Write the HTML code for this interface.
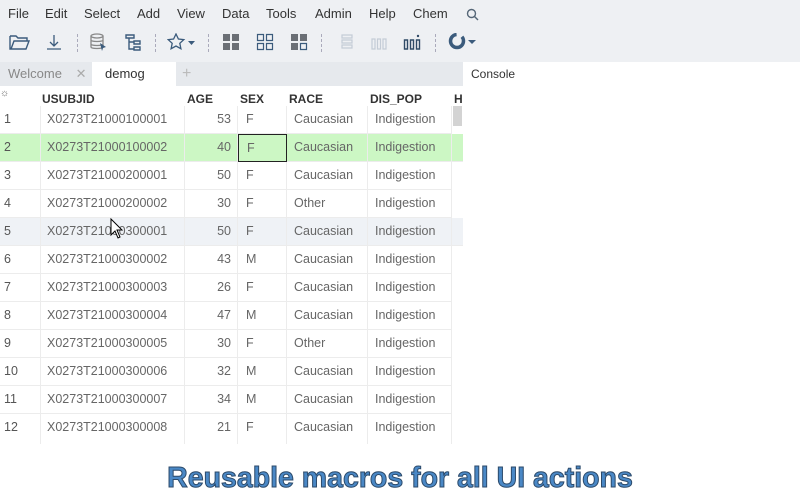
<!DOCTYPE html>
<html><head><meta charset="utf-8"><style>
*{margin:0;padding:0;box-sizing:border-box}
body{width:800px;height:500px;overflow:hidden;background:#fff;font-family:"Liberation Sans",sans-serif;position:relative}
.top{position:absolute;left:0;top:0;width:800px;height:62px;background:#eef0f3}
.menu span{position:absolute;top:6px;font-size:13px;color:#333}
.ic{position:absolute;top:33px}
.sep{position:absolute;top:34px;width:0;height:18px;border-left:1px dashed #aab}
.tabs{position:absolute;left:0;top:62px;width:463px;height:24px;background:#e6e9ed}
.tab{position:absolute;top:62px;height:24px;font-size:13px;line-height:24px}
.right{position:absolute;left:463px;top:62px;width:337px;height:382px;background:#fff}
.hd{position:absolute;top:6px;font-size:12px;font-weight:bold;color:#333}
.row{position:absolute;left:0;width:452px;height:28px;border-bottom:1px solid #ececec;font-size:12.5px;color:#666}
.row div{position:absolute;top:0;height:28px;line-height:27px;border-right:1px solid #ececec}
.c0{left:0;width:41px;padding-left:4px;color:#555}
.c1{left:41px;width:144px;padding-left:6px}
.c2{left:185px;width:53px;text-align:right;padding-right:6px}
.c3{left:238px;width:49px;padding-left:8px}
.c4{left:287px;width:81px;padding-left:7px}
.c5{left:368px;width:84px;padding-left:7px}
.title{position:absolute;left:0;width:800px;top:462px;text-align:center;font-size:28.5px;font-weight:bold;color:#4a88c6;-webkit-text-stroke:1px #2c4a6a}
</style></head><body>
<div class="top"></div>
<div class="menu">
<span style="left:8px">File</span><span style="left:45px">Edit</span><span style="left:84px">Select</span><span style="left:137px">Add</span><span style="left:177px">View</span><span style="left:222px">Data</span><span style="left:266px">Tools</span><span style="left:315px">Admin</span><span style="left:369px">Help</span><span style="left:413px">Chem</span>
<svg style="position:absolute;left:466px;top:8px" width="13" height="13"><circle cx="5.5" cy="5.5" r="4" fill="none" stroke="#567" stroke-width="1.4"/><path d="M8.5 8.5L12 12" stroke="#567" stroke-width="1.4"/></svg>
</div>
<svg class="ic" style="left:9px" width="22" height="18"><path d="M1 3h6l2 2h9v3M1 3v13h16l3-8H5l-3 8" fill="none" stroke="#3b5b7c" stroke-width="1.4"/></svg>
<svg class="ic" style="left:45px" width="18" height="18"><path d="M9 2v11M5 9l4 4 4-4M2 16h14" fill="none" stroke="#3b5b7c" stroke-width="1.3"/></svg>
<div class="sep" style="left:77px"></div>
<svg class="ic" style="left:89px" width="20" height="18"><ellipse cx="8" cy="3" rx="6" ry="2" fill="none" stroke="#888" stroke-width="1.3"/><path d="M2 3v11c0 2 12 2 12 0V3M2 7c0 2 12 2 12 0M2 11c0 2 12 2 12 0" fill="none" stroke="#888" stroke-width="1.3"/><path d="M11 10l6 4-3 1-1 3z" fill="#3b5b7c"/></svg>
<svg class="ic" style="left:124px" width="18" height="18"><path d="M2 2h8v3H2zM10 8h6v3h-6zM10 14h6v3h-6zM5 5v11h5M5 9h5" fill="none" stroke="#3b5b7c" stroke-width="1.4"/></svg>
<div class="sep" style="left:155px"></div>
<svg class="ic" style="left:167px" width="30" height="18"><path d="M9 1l2.4 5 5.4.6-4 3.7 1.1 5.4L9 13l-4.9 2.7 1.1-5.4-4-3.7 5.4-.6z" fill="none" stroke="#3b5b7c" stroke-width="1.3"/><path d="M21 8h7l-3.5 4z" fill="#3b5b7c"/></svg>
<div class="sep" style="left:208px"></div>
<svg class="ic" style="left:222px" width="18" height="18"><path d="M1 1h7v7H1zM10 1h7v7h-7zM1 10h7v7H1zM10 10h7v7h-7z" fill="#6b6f75"/></svg>
<svg class="ic" style="left:256px" width="18" height="18"><path d="M1.5 1.5h6v6h-6zM10.5 1.5h6v6h-6zM1.5 10.5h6v6h-6zM10.5 10.5h6v6h-6z" fill="none" stroke="#3b5b7c" stroke-width="1.2"/></svg>
<svg class="ic" style="left:290px" width="18" height="18"><path d="M1 1h7v7H1zM10 1h7v7h-7zM1 10h7v7H1z" fill="#6b6f75"/><path d="M10.5 10.5h6v6h-6z" fill="none" stroke="#3b5b7c" stroke-width="1.2"/></svg>
<div class="sep" style="left:321px"></div>
<svg class="ic" style="left:336px" width="18" height="18"><path d="M6 2h10v3H6zM6 7h10v3H6zM6 12h10v3H6z" fill="none" stroke="#c4ccd6" stroke-width="1.2"/></svg>
<svg class="ic" style="left:370px" width="18" height="18"><path d="M2 6h3v10H2zM7.5 6h3v10h-3zM13 6h3v10h-3z" fill="none" stroke="#c4ccd6" stroke-width="1.2"/></svg>
<svg class="ic" style="left:403px" width="18" height="18"><path d="M1.5 7h3v9h-3zM7.5 7h3v9h-3zM13.5 7h3v9h-3z" fill="none" stroke="#2f4a66" stroke-width="1.4"/><circle cx="15" cy="3" r="1.2" fill="#2f4a66"/></svg>
<div class="sep" style="left:435px"></div>
<svg class="ic" style="left:448px" width="30" height="20"><circle cx="9" cy="8" r="6.5" fill="none" stroke="#3b5b7c" stroke-width="3.5" stroke-dasharray="30 6"/><path d="M20 7h8l-4 4z" fill="#3b5b7c"/></svg>
<div class="tabs"></div>
<div class="tab" style="left:8px;color:#888">Welcome <span style="margin-left:10px;color:#aaa">✕</span></div>
<div class="tab" style="left:92px;width:84px;background:#fff;padding-left:13px;color:#333">demog</div>
<div class="tab" style="left:182px;color:#bbb;font-size:16px">+</div>
<div class="right"><div style="position:absolute;left:8px;top:5px;font-size:12px;color:#333">Console</div></div>
<div style="position:absolute;left:0;top:86px;width:463px;height:20px;background:#fff"></div>
<span class="hd" style="left:0;top:88px;font-weight:normal;color:#666;font-size:10px">☼</span>
<span class="hd" style="left:42px;top:92px">USUBJID</span>
<span class="hd" style="left:187px;top:92px">AGE</span>
<span class="hd" style="left:240px;top:92px">SEX</span>
<span class="hd" style="left:289px;top:92px">RACE</span>
<span class="hd" style="left:370px;top:92px">DIS_POP</span>
<span class="hd" style="left:454px;top:92px">H</span>
<div style="position:absolute;left:452px;top:106px;width:11px;height:338px;background:#fff"></div>
<div style="position:absolute;left:453px;top:106px;width:9px;height:20px;background:#d3d3d3"></div>

<div class="row" style="top:106px"><div class="c0">1</div><div class="c1">X0273T21000100001</div><div class="c2">53</div><div class="c3">F</div><div class="c4">Caucasian</div><div class="c5">Indigestion</div></div>
<div class="row" style="top:134px;background:#ccf7c4;width:463px"><div class="c0">2</div><div class="c1">X0273T21000100002</div><div class="c2">40</div><div class="c3" style="border:1px solid #222">F</div><div class="c4">Caucasian</div><div class="c5">Indigestion</div></div>
<div class="row" style="top:162px"><div class="c0">3</div><div class="c1">X0273T21000200001</div><div class="c2">50</div><div class="c3">F</div><div class="c4">Caucasian</div><div class="c5">Indigestion</div></div>
<div class="row" style="top:190px"><div class="c0">4</div><div class="c1">X0273T21000200002</div><div class="c2">30</div><div class="c3">F</div><div class="c4">Other</div><div class="c5">Indigestion</div></div>
<div class="row" style="top:218px;background:#eff2f6;width:463px"><div class="c0">5</div><div class="c1">X0273T21000300001</div><div class="c2">50</div><div class="c3">F</div><div class="c4">Caucasian</div><div class="c5">Indigestion</div></div>
<div class="row" style="top:246px"><div class="c0">6</div><div class="c1">X0273T21000300002</div><div class="c2">43</div><div class="c3">M</div><div class="c4">Caucasian</div><div class="c5">Indigestion</div></div>
<div class="row" style="top:274px"><div class="c0">7</div><div class="c1">X0273T21000300003</div><div class="c2">26</div><div class="c3">F</div><div class="c4">Caucasian</div><div class="c5">Indigestion</div></div>
<div class="row" style="top:302px"><div class="c0">8</div><div class="c1">X0273T21000300004</div><div class="c2">47</div><div class="c3">M</div><div class="c4">Caucasian</div><div class="c5">Indigestion</div></div>
<div class="row" style="top:330px"><div class="c0">9</div><div class="c1">X0273T21000300005</div><div class="c2">30</div><div class="c3">F</div><div class="c4">Other</div><div class="c5">Indigestion</div></div>
<div class="row" style="top:358px"><div class="c0">10</div><div class="c1">X0273T21000300006</div><div class="c2">32</div><div class="c3">M</div><div class="c4">Caucasian</div><div class="c5">Indigestion</div></div>
<div class="row" style="top:386px"><div class="c0">11</div><div class="c1">X0273T21000300007</div><div class="c2">34</div><div class="c3">M</div><div class="c4">Caucasian</div><div class="c5">Indigestion</div></div>
<div class="row" style="top:414px;height:30px;border-bottom:none"><div class="c0" style="height:30px">12</div><div class="c1" style="height:30px">X0273T21000300008</div><div class="c2" style="height:30px">21</div><div class="c3" style="height:30px">F</div><div class="c4" style="height:30px">Caucasian</div><div class="c5" style="height:30px">Indigestion</div></div>

<svg style="position:absolute;left:110px;top:218px" width="14" height="22"><path d="M1 1v16l4-4 3 7 2-1-3-7h5z" fill="#fff" stroke="#000" stroke-width="1"/></svg>
<div class="title">Reusable macros for all UI actions</div>
</body></html>
